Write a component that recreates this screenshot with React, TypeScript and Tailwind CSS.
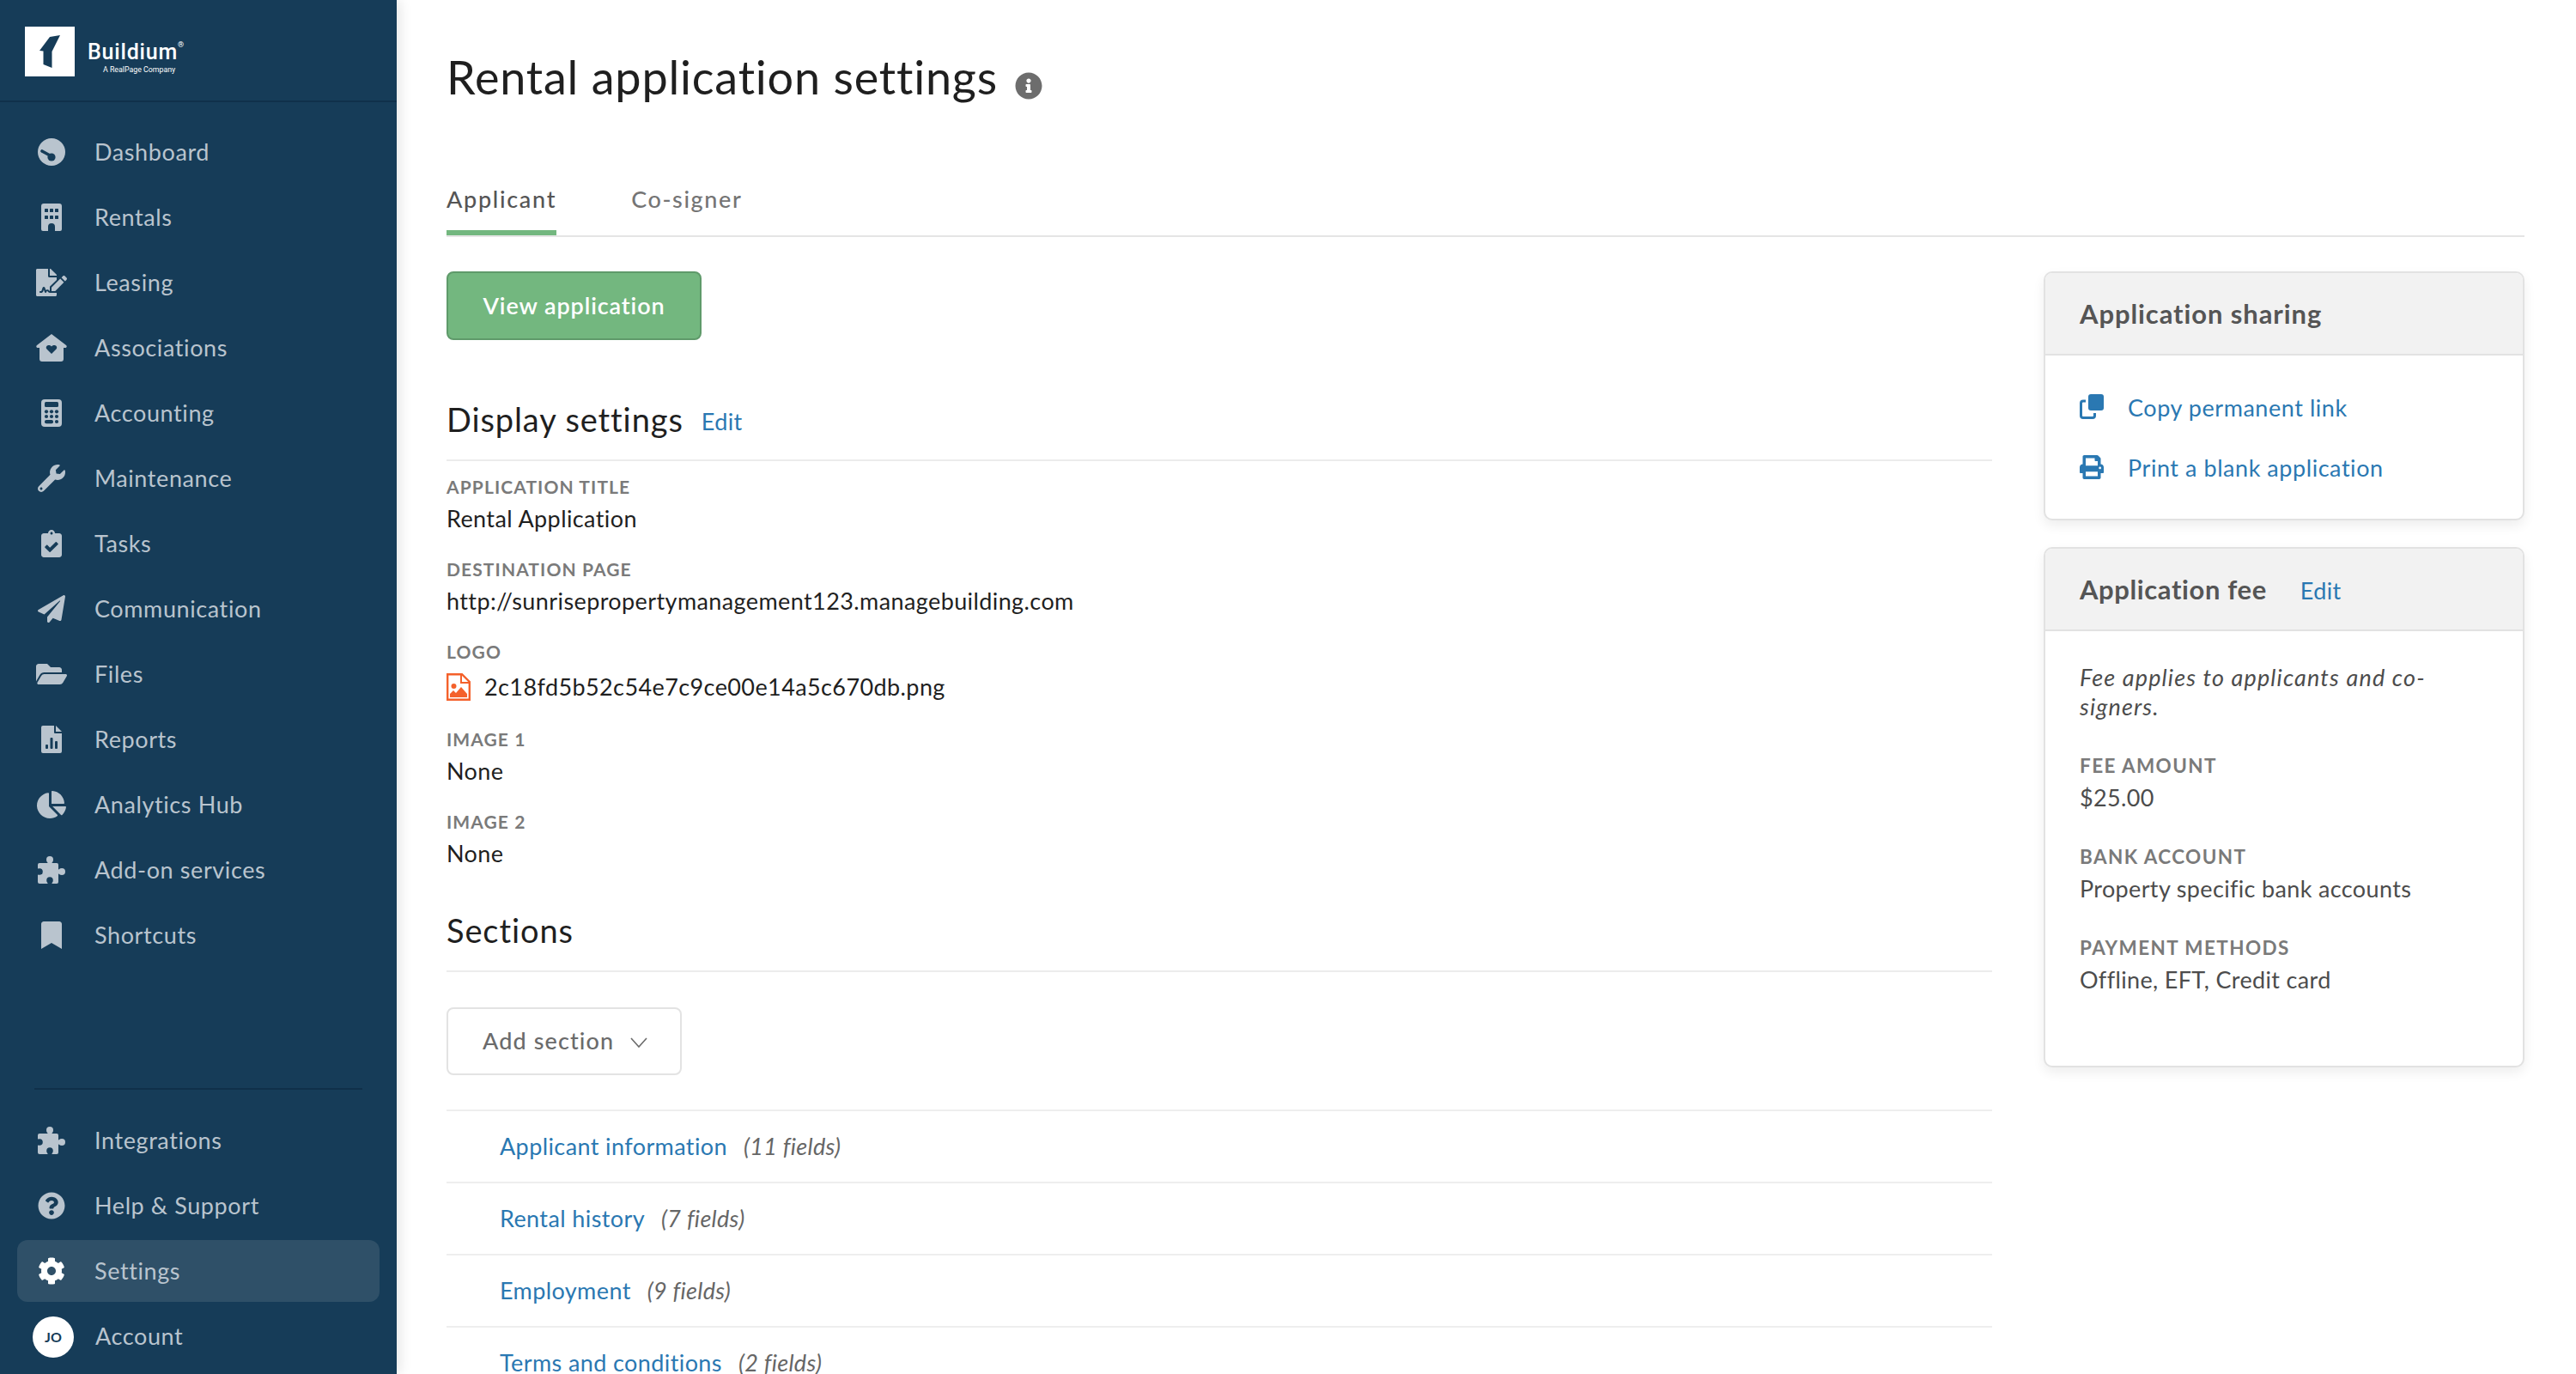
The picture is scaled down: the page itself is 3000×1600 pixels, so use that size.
import React from "react";
import {
  FaFileSignature, FaWrench, FaClipboardCheck, FaPaperPlane,
  FaFolderOpen, FaChartPie, FaBookmark, FaQuestionCircle, FaCog, FaPrint, FaInfoCircle,
} from "react-icons/fa";

const G = "#b9c4ce";
const D = "#163c58";

function DashIcon() {
  return (
    <svg viewBox="0 0 32 32" className="w-[32px] h-[32px]">
      <circle cx="16" cy="16" r="16" fill={G} />
      <path d="M5 15 L16 21" stroke={D} strokeWidth="3.6" strokeLinecap="round" />
      <circle cx="16" cy="22" r="4.6" fill={D} />
    </svg>
  );
}
function BuildingIcon() {
  return (
    <svg viewBox="0 0 24 32" className="w-[24px] h-[32px]">
      <path d="M3 0 L21 0 Q24 0 24 3 L24 30 Q24 32 22 32 L16 32 L16 27 A4 4 0 0 0 8 27 L8 32 L2 32 Q0 32 0 30 L0 3 Q0 0 3 0 Z" fill={G} />
      {[4, 10, 16].map((x) =>
        [6, 14].map((y) => <rect key={`${x}-${y}`} x={x} y={y} width="4" height="4" rx="0.6" fill={D} />)
      )}
    </svg>
  );
}
function CalcIcon() {
  return (
    <svg viewBox="0 0 24 32" className="w-[24px] h-[32px]">
      <rect width="24" height="32" rx="4" fill={G} />
      <rect x="4" y="3" width="16" height="6" rx="1.5" fill={D} />
      {[6, 12, 18].map((x) =>
        [14.3, 20].map((y) => <circle key={`${x}-${y}`} cx={x} cy={y} r="2.1" fill={D} />)
      )}
      <rect x="4" y="24" width="10" height="4.2" rx="2" fill={D} />
      <circle cx="18" cy="26" r="2.1" fill={D} />
    </svg>
  );
}
function PuzzleIcon() {
  return (
    <svg viewBox="0 0 32 32" className="w-[32px] h-[32px]">
      <rect x="0" y="8" width="24" height="24" rx="2" fill={G} />
      <circle cx="14" cy="4" r="4" fill={G} />
      <rect x="11.5" y="6" width="5" height="4" fill={G} />
      <circle cx="28" cy="18" r="4" fill={G} />
      <rect x="22" y="15.5" width="4" height="5" fill={G} />
      <circle cx="2" cy="18" r="3.8" fill={D} />
      <rect x="-1" y="15.5" width="2" height="5" fill={D} />
      <circle cx="14" cy="28" r="3.8" fill={D} />
      <rect x="11.5" y="29" width="5" height="3.2" fill={D} />
    </svg>
  );
}
function HouseHeart() {
  return (
    <svg viewBox="0 0 36 32" className="w-[36px] h-[32px]">
      <path d="M18 0 L35 13 C36.5 14.5 35.5 16 34 16 L32 16 L32 29 Q32 32 29 32 L7 32 Q4 32 4 29 L4 16 L2 16 C0.5 16 -0.5 14.5 1 13 Z" fill={G} />
      <path d="M18 23 L12.5 17.6 C10 14.5 14.5 11 18 14.5 C21.5 11 26 14.5 23.5 17.6 Z" fill={D} />
    </svg>
  );
}
function ReportIcon() {
  return (
    <svg viewBox="0 0 24 32" className="w-[24px] h-[32px]">
      <path d="M2 0 L15 0 L15 8 Q15 9 16 9 L24 9 L24 30 Q24 32 22 32 L2 32 Q0 32 0 30 L0 2 Q0 0 2 0 Z" fill={G} />
      <path d="M17 0 L24 7 L17 7 Z" fill={G} />
      <rect x="5" y="22" width="3" height="5" rx="1" fill={D} />
      <rect x="10.5" y="14" width="3" height="13" rx="1" fill={D} />
      <rect x="16" y="18" width="3" height="9" rx="1" fill={D} />
    </svg>
  );
}
function CopyIcon() {
  return (
    <svg viewBox="0 0 28 29" className="w-[28px] h-[29px] mt-[3px] shrink-0">
      <rect x="10" y="0" width="18" height="19" rx="3" fill="#2a78b2" />
      <path d="M7 8 L4 8 Q1.5 8 1.5 10.5 L1.5 25 Q1.5 27.5 4 27.5 L15 27.5 Q17.5 27.5 17.5 25 L17.5 22" fill="none" stroke="#2a78b2" strokeWidth="3" />
    </svg>
  );
}
function FileImg() {
  return (
    <svg viewBox="0 0 28 32" className="w-[28px] h-[32px] shrink-0">
      <path d="M1.2 1.2 L18 1.2 L26.8 10 L26.8 30.8 L1.2 30.8 Z" fill="none" stroke="#f4612b" strokeWidth="2.4" />
      <path d="M17 1.5 L17 11 L26.5 11" fill="none" stroke="#f4612b" strokeWidth="2" />
      <circle cx="8.5" cy="15" r="3" fill="#f4612b" />
      <path d="M4 28 L4 24 L8 20 L11 23 L17 16 L24 24 L24 28 Z" fill="#f4612b" />
    </svg>
  );
}
function Logo() {
  return (
    <svg viewBox="0 0 58 58" className="w-[58px] h-[58px] shrink-0">
      <rect width="58" height="58" fill="#fff" />
      <path d="M41 10 L29 12 L17 28 L21.5 28.5 L21.5 44 L31.5 48 L31.5 29 Z" fill={D} />
    </svg>
  );
}

const ic = "text-[#b9c4ce]";
const topNav: [string, React.ReactNode][] = [
  ["Dashboard", <DashIcon />],
  ["Rentals", <BuildingIcon />],
  ["Leasing", <FaFileSignature className={ic} size={36} />],
  ["Associations", <HouseHeart />],
  ["Accounting", <CalcIcon />],
  ["Maintenance", <FaWrench className={ic} size={32} />],
  ["Tasks", <FaClipboardCheck className={ic} size={32} />],
  ["Communication", <FaPaperPlane className={ic} size={32} />],
  ["Files", <FaFolderOpen className={ic} size={36} />],
  ["Reports", <ReportIcon />],
  ["Analytics Hub", <FaChartPie className={ic} size={34} />],
  ["Add-on services", <PuzzleIcon />],
  ["Shortcuts", <FaBookmark className={ic} size={32} />],
];

function NavItem({ label, icon, active }: { label: string; icon: React.ReactNode; active?: boolean }) {
  return (
    <div className={`mx-[20px] my-[2px] h-[72px] pl-[20px] rounded-[12px] flex items-center ${active ? "bg-[#2f5068]" : ""}`}>
      <span className="w-[40px] flex justify-center shrink-0">{icon}</span>
      <span className="ml-[30px] text-[27px] tracking-[0.6px] text-[#b9c4ce] whitespace-nowrap">{label}</span>
    </div>
  );
}

const label = "text-[21px] leading-[30px] font-bold tracking-[1.1px] text-[#7a7a7a] uppercase";
const sideLabel = "text-[22.5px] leading-[30px] font-bold tracking-[1.4px] text-[#7a7a7a] uppercase";
const value = "mt-[3px] text-[27px] leading-[38px] tracking-[0.4px] text-[#1f1f1f]";
const sideValue = "mt-[3px] text-[27px] leading-[38px] tracking-[0.35px] text-[#4c4c4c]";
const link = "text-[#2a78b2] text-[27px] tracking-[0.4px]";
const cardLink = "text-[#2a78b2] text-[27px] leading-[38px] tracking-[0.55px] ml-[28px]";

function Field({ name, val, cls }: { name: string; val: React.ReactNode; cls?: string }) {
  return (
    <div className={cls}>
      <div className={label}>{name}</div>
      <div className={value}>{val}</div>
    </div>
  );
}

function SectionRow({ name, count }: { name: string; count: string }) {
  return (
    <div className="h-[84px] shrink-0 pl-[62px] flex items-center border-b-2 border-[#eeeeee] whitespace-nowrap">
      <span className={link}>{name}</span>
      <span className="ml-[19px] text-[27px] italic tracking-[0.3px] text-[#666666]">{count}</span>
    </div>
  );
}

export default function App() {
  return (
    <div className="flex h-[1600px] w-[3000px] overflow-hidden bg-white font-[Lato,sans-serif]">
      <aside className="relative z-10 w-[462px] shrink-0 bg-[#163c58] flex flex-col shadow-[4px_0_14px_rgba(0,0,0,0.10)]">
        <div className="h-[119px] shrink-0 border-b-2 border-[#10304a] pl-[29px] pt-[31px] flex items-start">
          <Logo />
          <div className="ml-[15px] mt-[16px] text-white leading-none font-[Roboto,sans-serif]">
            <div className="text-[25px] leading-[28px] font-medium tracking-[0.8px] whitespace-nowrap">
              Buildium<sup className="text-[9px] align-super">®</sup>
            </div>
            <div className="text-[8.8px] leading-[12px] pl-[18px] whitespace-nowrap">A RealPage Company</div>
          </div>
        </div>
        <nav className="pt-[20px] flex flex-col">
          {topNav.map(([l, i]) => (
            <NavItem key={l} label={l} icon={i} />
          ))}
        </nav>
        <div className="mt-auto pb-[5px] flex flex-col">
          <div className="mx-[40px] h-[2px] bg-[#10304a] mb-[21px]" />
          <NavItem label="Integrations" icon={<PuzzleIcon />} />
          <NavItem label="Help & Support" icon={<FaQuestionCircle className={ic} size={32} />} />
          <NavItem label="Settings" active icon={<FaCog className="text-white" size={32} />} />
          <div className="h-[77px] pl-[38px] flex items-center">
            <span className="w-[48px] h-[48px] rounded-full bg-white text-[#163c58] text-[16px] font-bold flex items-center justify-center">JO</span>
            <span className="ml-[25px] text-[27px] tracking-[0.6px] text-[#b9c4ce]">Account</span>
          </div>
        </div>
      </aside>

      <main className="flex-1 pl-[58px] pr-[60px] min-w-0">
        <div className="pt-[56px] h-[196px] flex items-start">
          <h1 className="text-[54px] leading-[68px] tracking-[0.8px] text-[#1f1f1f] whitespace-nowrap">Rental application settings</h1>
          <FaInfoCircle className="ml-[20px] mt-[28px] text-[#6d6d6d]" size={32} />
        </div>
        <div className="h-[80px] border-b-2 border-[#e5e5e5] flex">
          <div className="h-[78px] pt-[18px] border-b-[6px] border-[#73b77f] text-[27px] leading-[36px] font-medium tracking-[1.7px] text-[#555555]">Applicant</div>
          <div className="h-[78px] pt-[18px] ml-[87px] text-[27px] leading-[36px] font-medium tracking-[1.6px] text-[#757575]">Co-signer</div>
        </div>
        <div className="mt-[40px] flex items-start justify-between">
          <section className="w-[1800px] shrink-0 flex flex-col">
            <button className="w-[297px] h-[80px] rounded-[8px] bg-[#73b77f] border-2 border-[#5f9a6a] text-white text-[27px] font-semibold tracking-[0.9px] flex items-center justify-center">View application</button>

            <div className="mt-[68px] h-[73px] border-b-2 border-[#ececec] flex items-start">
              <h2 className="text-[38px] leading-[48px] tracking-[0.9px] text-[#1f1f1f]">Display settings</h2>
              <span className={`${link} ml-[21px] leading-[48px] mt-[3px]`}>Edit</span>
            </div>
            <Field cls="mt-[15px]" name="Application title" val="Rental Application" />
            <Field cls="mt-[25px]" name="Destination page" val="http://sunrisepropertymanagement123.managebuilding.com" />
            <div className="mt-[25px]">
              <div className={label}>Logo</div>
              <div className="mt-[7px] h-[38px] flex items-center text-[27px] tracking-[0.4px] text-[#1f1f1f]">
                <FileImg />
                <span className="ml-[16px]">2c18fd5b52c54e7c9ce00e14a5c670db.png</span>
              </div>
            </div>
            <Field cls="mt-[27px]" name="Image 1" val="None" />
            <Field cls="mt-[25px]" name="Image 2" val="None" />

            <div className="mt-[46px] h-[73px] border-b-2 border-[#ececec]">
              <h2 className="text-[38px] leading-[48px] tracking-[0.9px] text-[#1f1f1f]">Sections</h2>
            </div>
            <button className="mt-[41px] w-[274px] h-[79px] rounded-[8px] border-2 border-[#e3e3e3] pl-[40px] flex items-center text-[27px] font-medium tracking-[1.1px] text-[#6b6b6b]">
              Add section
              <svg viewBox="0 0 20 12" className="ml-[19px] mt-[3px] w-[20px] h-[12px]">
                <path d="M1 1 L10 11 L19 1" fill="none" stroke="#6b6b6b" strokeWidth="1.6" />
              </svg>
            </button>
            <div className="mt-[40px] border-t-2 border-[#eeeeee] flex flex-col">
              <SectionRow name="Applicant information" count="(11 fields)" />
              <SectionRow name="Rental history" count="(7 fields)" />
              <SectionRow name="Employment" count="(9 fields)" />
              <SectionRow name="Terms and conditions" count="(2 fields)" />
            </div>
          </section>

          <aside className="w-[560px] shrink-0 flex flex-col gap-[31px]">
            <div className="h-[290px] rounded-[10px] border-2 border-[#e2e2e2] bg-white shadow-[0_6px_14px_rgba(0,0,0,0.07)] overflow-hidden">
              <div className="h-[96px] bg-[#f2f2f2] border-b-2 border-[#e2e2e2] pl-[40px] flex items-center text-[31px] font-bold tracking-[0.9px] text-[#555555]">Application sharing</div>
              <div className="pl-[40px] pt-[42px] flex flex-col">
                <div className="h-[70px] flex items-start">
                  <CopyIcon />
                  <span className={cardLink}>Copy permanent link</span>
                </div>
                <div className="h-[70px] flex items-start">
                  <FaPrint className="text-[#2a78b2] mt-[4px] shrink-0" size={28} />
                  <span className={cardLink}>Print a blank application</span>
                </div>
              </div>
            </div>
            <div className="h-[606px] rounded-[10px] border-2 border-[#e2e2e2] bg-white shadow-[0_6px_14px_rgba(0,0,0,0.07)] overflow-hidden">
              <div className="h-[96px] bg-[#f2f2f2] border-b-2 border-[#e2e2e2] pl-[40px] flex items-center">
                <span className="text-[31px] font-bold tracking-[0.6px] text-[#555555]">Application fee</span>
                <span className={`${link} ml-[39px] mt-[4px]`}>Edit</span>
              </div>
              <div className="pl-[40px] pr-[60px] pt-[37px]">
                <p className="text-[27px] leading-[34px] italic tracking-[1.15px] text-[#4c4c4c]">Fee applies to applicants and co-signers.</p>
                <div className="mt-[37px]">
                  <div className={sideLabel}>Fee amount</div>
                  <div className={sideValue}>$25.00</div>
                </div>
                <div className="mt-[35px]">
                  <div className={sideLabel}>Bank account</div>
                  <div className={sideValue}>Property specific bank accounts</div>
                </div>
                <div className="mt-[35px]">
                  <div className={sideLabel}>Payment methods</div>
                  <div className={sideValue}>Offline, EFT, Credit card</div>
                </div>
              </div>
            </div>
          </aside>
        </div>
      </main>
    </div>
  );
}
